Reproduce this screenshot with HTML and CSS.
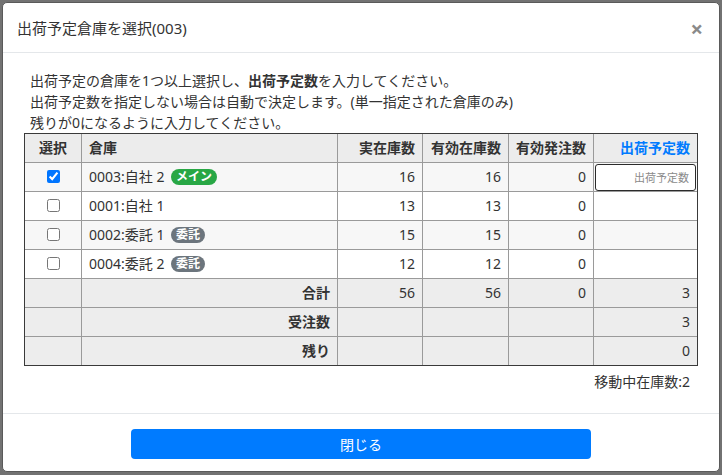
FILE: index.html
```html
<!DOCTYPE html>
<html lang="ja">
<head>
    <meta charset="UTF-8">
    <title>出荷予定倉庫を選択</title>
    <link rel="stylesheet" href="styles.css">
</head>
<body>
    <div class="modal">
        <div class="modal-header">
            <h5 class="modal-title">出荷予定倉庫を選択(003)</h5>
            <span class="close">&times;</span>
        </div>
        <div class="modal-body">
            <p class="note">出荷予定の倉庫を1つ以上選択し、<b>出荷予定数</b>を入力してください。</p>
            <p class="note">出荷予定数を指定しない場合は自動で決定します。(単一指定された倉庫のみ)</p>
            <p class="note">残りが0になるように入力してください。</p>
            <table class="stock">
                <colgroup>
                    <col class="c-sel">
                    <col class="c-name">
                    <col class="c-num">
                    <col class="c-num2">
                    <col class="c-num">
                    <col>
                </colgroup>
                <thead>
                    <tr>
                        <th class="center">選択</th>
                        <th class="left">倉庫</th>
                        <th>実在庫数</th>
                        <th>有効在庫数</th>
                        <th>有効発注数</th>
                        <th class="plan">出荷予定数</th>
                    </tr>
                </thead>
                <tbody>
                    <tr class="odd">
                        <td class="center"><input type="checkbox" checked></td>
                        <td class="left">0003:自社 2 <span class="badge green">メイン</span></td>
                        <td>16</td><td>16</td><td>0</td>
                        <td class="input-cell"><input class="qty" type="text" placeholder="出荷予定数"></td>
                    </tr>
                    <tr>
                        <td class="center"><input type="checkbox"></td>
                        <td class="left">0001:自社 1</td>
                        <td>13</td><td>13</td><td>0</td><td></td>
                    </tr>
                    <tr class="odd">
                        <td class="center"><input type="checkbox"></td>
                        <td class="left">0002:委託 1 <span class="badge gray">委託</span></td>
                        <td>15</td><td>15</td><td>0</td><td></td>
                    </tr>
                    <tr>
                        <td class="center"><input type="checkbox"></td>
                        <td class="left">0004:委託 2 <span class="badge gray">委託</span></td>
                        <td>12</td><td>12</td><td>0</td><td></td>
                    </tr>
                </tbody>
                <tfoot>
                    <tr>
                        <td></td><th>合計</th><td>56</td><td>56</td><td>0</td><td>3</td>
                    </tr>
                    <tr>
                        <td></td><th>受注数</th><td></td><td></td><td></td><td>3</td>
                    </tr>
                    <tr>
                        <td></td><th>残り</th><td></td><td></td><td></td><td>0</td>
                    </tr>
                </tfoot>
            </table>
            <p class="moving">移動中在庫数:2</p>
        </div>
        <div class="modal-footer">
            <button class="btn-close" type="button">閉じる</button>
        </div>
    </div>
</body>
</html>
```

FILE: styles.css
```css
body{
    margin:0;
    background-color:#727272;
    font-family:"Noto Sans","Noto Sans CJK JP",sans-serif;
    color:#333;
}
p,h5{margin:0;}

.modal{
    margin:2px 2px 0;
    width:716px;
    height:468px;
    background-color:#fff;
    border:1px solid #5a5a5a;
    border-radius:5px;
    display:flex;
    flex-direction:column;
}
.modal-header{
    display:flex;
    justify-content:space-between;
    align-items:center;
    height:49px;
    padding:0 16px 0 14px;
    border-bottom:1px solid #e4e7ea;
}
.modal-title{
    font-size:15px;
    font-weight:normal;
    line-height:20px;
    color:#333;
}
.close{
    font-size:22px;
    font-weight:bold;
    color:#8a8a8a;
    line-height:20px;
    cursor:pointer;
}

.modal-body{
    flex:1;
    padding:17px 22px 0 21px;
}
.note{
    padding-left:6px;
    font-size:14px;
    line-height:21px;
}
.note b{font-weight:bold;}

.stock{
    width:674px;
    table-layout:fixed;
    border-collapse:separate;
    border-spacing:0;
    border:1px solid #3a3a3a;
    font-size:14px;
}
.c-sel{width:56px;}
.c-name{width:256px;}
.c-num{width:85px;}
.c-num2{width:86px;}
.stock th,
.stock td{
    height:20px;
    padding:4px 7px;
    line-height:20px;
    text-align:right;
    border-left:1px solid #9a9a9a;
    border-top:1px solid #9a9a9a;
    white-space:nowrap;
}
.stock tr > :first-child{border-left:0;}
.stock thead tr:first-child th{border-top:0;}
.stock thead th{
    background-color:#ececec;
    font-weight:bold;
}
.stock th.plan{color:#007bff;}
.stock .center{text-align:center;}
.stock .left{text-align:left;}
.stock tbody tr.odd td{background-color:#f7f7f7;}
.stock tfoot td,
.stock tfoot th{
    background-color:#ededed;
    font-weight:normal;
}
.stock tfoot th{font-weight:bold;}

.stock input[type=checkbox]{
    margin:0;
    width:13px;
    height:13px;
    vertical-align:-1px;
}
.stock td.input-cell{padding:0 1px;}
.qty{
    box-sizing:border-box;
    width:100%;
    height:27px;
    margin:0;
    padding:0 6px;
    border:1px solid #2b2b2b;
    border-radius:3px;
    font-family:inherit;
    font-size:11px;
    text-align:right;
    display:block;
}
.qty::placeholder{color:#8a8a8a;}

.badge{
    display:inline-block;
    margin-left:3px;
    padding:0 5px;
    height:16px;
    line-height:16px;
    font-size:12px;
    font-weight:bold;
    color:#fff;
    border-radius:8px;
    vertical-align:1px;
}
.badge.green{background-color:#28a745;}
.badge.gray{background-color:#6c757d;}

.moving{
    padding:6px 7px 0 0;
    font-size:14px;
    line-height:20px;
    text-align:right;
}

.modal-footer{
    display:flex;
    justify-content:center;
    padding:15px 0 12px;
    border-top:1px solid #e4e7ea;
}
.btn-close{
    width:460px;
    height:30px;
    border:0;
    border-radius:4px;
    background-color:#007bff;
    color:#fff;
    font-family:inherit;
    font-size:14px;
    cursor:pointer;
}
```
